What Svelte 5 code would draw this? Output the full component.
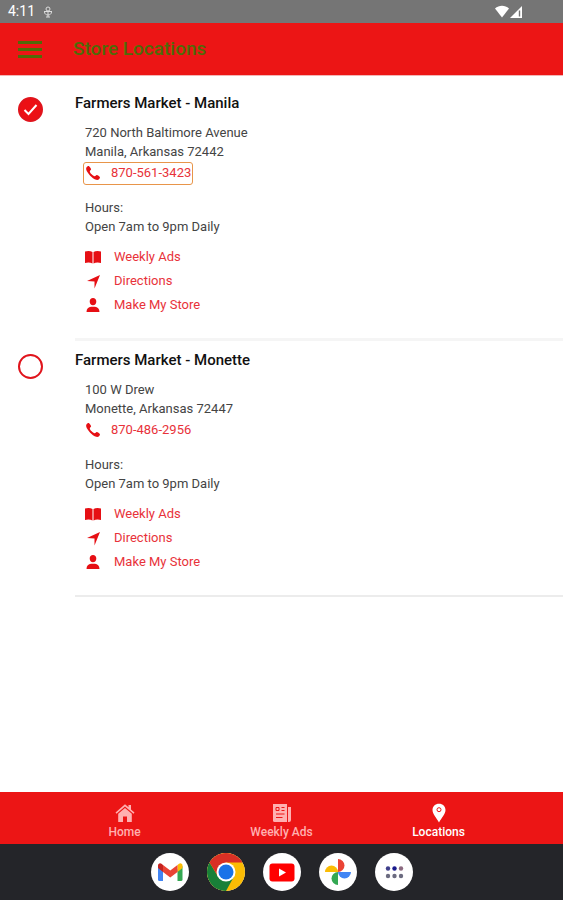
<script>
	let selected = 'manila';
	let tab = 'locations';

	const stores = [
		{
			id: 'manila',
			name: 'Farmers Market - Manila',
			street: '720 North Baltimore Avenue',
			city: 'Manila, Arkansas 72442',
			phone: '870-561-3423',
			hours: 'Open 7am to 9pm Daily',
			focused: true
		},
		{
			id: 'monette',
			name: 'Farmers Market - Monette',
			street: '100 W Drew',
			city: 'Monette, Arkansas 72447',
			phone: '870-486-2956',
			hours: 'Open 7am to 9pm Daily',
			focused: false
		}
	];
</script>

<div class="screen">
	<div class="status">
		<span>4:11</span>
		<svg class="mic" viewBox="0 0 10 12" width="10" height="12">
			<circle cx="5" cy="3" r="2" />
			<path d="M1 5.5h8M1.500 6c0 4 7 4 7 0M5 5v6M3 11h4" />
		</svg>
		<svg class="signal" viewBox="0 0 28 14" width="28" height="14">
			<path d="M0 3.600C4-.2 10-.2 14 3.600L7 12.600z" />
			<path d="M27 1v12H15z" />
			<path d="M24.500 5.500v6" stroke="#757575" stroke-width="1.400" />
		</svg>
	</div>

	<header>
		<button class="menu" aria-label="Menu">
			<span></span>
			<span></span>
			<span></span>
		</button>
		<h1>Store Locations</h1>
	</header>

	<main>
		{#each stores as store}
			<article>
				<label class="pick">
					<input
						type="radio"
						name="store"
						value={store.id}
						aria-label={store.name}
						bind:group={selected}
					/>
					{#if selected === store.id}
						<svg viewBox="0 0 25 25" width="25" height="25">
							<path d="M6.500 13l4 4L18.500 8" />
						</svg>
					{/if}
				</label>

				<div class="info">
					<h2>{store.name}</h2>
					<div class="details">
						<p>{store.street}</p>
						<p>{store.city}</p>
						<a class="phone" class:focused={store.focused} href="tel:{store.phone}">
							<svg viewBox="0 0 16 16" width="16" height="16">
								<path
									d="M1.300 2.700C2 1.600 3.200.8 4.100 1.200c.9.7 1.800 2.100 2 3.100.1.8-1.300 1.300-1.300 2.200.3 1.700 3.100 4.400 4.800 4.700.9 0 1.400-1.400 2.200-1.300 1 .2 2.600 1.200 3.100 2.100.3 1-.6 2.100-1.600 2.800-1.200.6-4.300-.5-7-3.100C3.500 9 .4 5 1.300 2.700z"
								/>
							</svg>
							{store.phone}
						</a>

						<p class="hours">Hours:</p>
						<p>{store.hours}</p>

						<ul>
							<li>
								<a href="#ads">
									<svg viewBox="0 0 16 16" width="16" height="16">
										<path d="M0 2.500C2.500 1.600 5.500 1.700 7.500 3v11.500C5.500 13.300 2.500 13.200 0 14z" />
										<path d="M16 2.500C13.500 1.600 10.500 1.700 8.500 3v11.500c2-1.200 5-1.300 7.500-.5z" />
									</svg>
									Weekly Ads
								</a>
							</li>
							<li>
								<a href="#directions">
									<svg viewBox="0 0 16 16" width="16" height="16">
										<path d="M15 2L9.500 15.500V8.500L2 8z" />
									</svg>
									Directions
								</a>
							</li>
							<li>
								<a href="#my-store">
									<svg viewBox="0 0 16 16" width="16" height="16">
										<path
											d="M8 1c2 0 3.300 1.500 3.300 3.500S10 8.300 8 8.300 4.700 6.500 4.700 4.500 6 1 8 1zM1.500 15c0-3.300 2-4.700 4.500-5.200h4c2.500.5 4.500 1.900 4.500 5.200z"
										/>
									</svg>
									Make My Store
								</a>
							</li>
						</ul>
					</div>
				</div>
			</article>
		{/each}
	</main>

	<nav class="tabs">
		<button class:active={tab === 'home'} on:click={() => (tab = 'home')}>
			<svg viewBox="0 0 20 20" width="20" height="20">
				<path d="M10 1.200l3.500 3V2H16v4.400l3.500 3.200-1 1.200L10 3.600l-8.500 7.200-1-1.200z" />
				<path d="M10 4.900l6.800 5.800V19H12v-5.500H8V19H3.200v-8.300z" />
			</svg>
			Home
		</button>
		<button class:active={tab === 'ads'} on:click={() => (tab = 'ads')}>
			<svg viewBox="0 0 20 20" width="20" height="20">
				<path d="M1 1h14v18H2.500Q1 19 1 17.500z" />
				<path d="M16 4h3v13q0 2-2 2h-1z" />
				<path class="cut" d="M4 4.500h3v3H4zM9.500 4.500h3M9.500 7.500h3M4 11h8.500M4 14.500h6.500M15.500 4v14" />
			</svg>
			Weekly Ads
		</button>
		<button class:active={tab === 'locations'} on:click={() => (tab = 'locations')}>
			<svg viewBox="0 0 20 20" width="20" height="20">
				<path d="M10 .7c3.800 0 6.500 2.700 6.500 6.300 0 4-4 8-6.500 12.500C7.500 15 3.500 11 3.500 7c0-3.600 2.700-6.300 6.500-6.300z" />
				<circle class="cut" cx="10" cy="6.700" r="2" />
			</svg>
			Locations
		</button>
	</nav>

	<div class="dock">
		<button aria-label="Gmail">
			<svg viewBox="0 0 38 38">
				<path fill="#4285f4" d="M7 13l5 3.500V28H8.500Q7 28 7 26.500z" />
				<path fill="#34a853" d="M26.500 16.500l5-3.500v13.500q0 1.500-1.500 1.500h-3.500z" />
				<path fill="#fbbc04" d="M26.500 12l1.500-1.300c1.500-1.200 3.500-.2 3.500 1.800V15l-5 4z" />
				<path fill="#c5221f" d="M12 12l-1.500-1.300C9 9.500 7 10.500 7 12.500V15l5 4z" />
				<path fill="#ea4335" d="M12 12l7.250 5.500L26.500 12v7l-7.250 5.500L12 19z" />
			</svg>
		</button>
		<button aria-label="Chrome">
			<svg viewBox="0 0 38 38">
				<circle cx="19" cy="19" r="19" fill="#fbbc04" />
				<path fill="#188038" d="M2.550 9.500A19 19 0 0 0 19 38l8-14.500L11 23.500z" />
				<path fill="#d93025" d="M2.550 9.500A19 19 0 0 1 35.450 9.500H19L11.200 23.500z" />
				<circle cx="19" cy="19" r="9.500" fill="#fff" />
				<circle cx="19" cy="19" r="7.500" fill="#1a73e8" />
			</svg>
		</button>
		<button aria-label="YouTube">
			<svg viewBox="0 0 38 38">
				<rect x="6.500" y="10.500" width="25" height="18" rx="3" fill="#f00" />
				<path fill="#fff" d="M16 15.500l7 4-7 4z" />
			</svg>
		</button>
		<button aria-label="Photos">
			<svg viewBox="0 0 38 38">
				<path fill="#ea4335" d="M19 6a6.500 6.500 0 0 1 0 13z" />
				<path fill="#4285f4" d="M32 19a6.500 6.500 0 0 1-13 0z" />
				<path fill="#34a853" d="M19 32a6.500 6.500 0 0 1 0-13z" />
				<path fill="#fbbc04" d="M6 19a6.500 6.500 0 0 1 13 0z" />
			</svg>
		</button>
		<button aria-label="All apps">
			<svg viewBox="0 0 38 38" fill="#6b6b80">
				<circle cx="13" cy="15.500" r="2.200" fill="#3f3f8c" />
				<circle cx="19.500" cy="15.500" r="2.200" fill="#1a1a8c" />
				<circle cx="26" cy="15.500" r="2.200" fill="#8c6a80" />
				<circle cx="13" cy="23" r="2.200" />
				<circle cx="19.500" cy="23" r="2.200" />
				<circle cx="26" cy="23" r="2.200" />
			</svg>
		</button>
	</div>
</div>

<style>
	:global(body) {
		margin: 0;
	}

	.screen {
		display: flex;
		flex-direction: column;
		min-height: 100vh;
		background: #fff;
		color: #444;
		font-family: Roboto, 'Liberation Sans', sans-serif;
		font-size: 13px;
		line-height: 19px;
	}

	h1,
	h2,
	p,
	ul {
		margin: 0;
		padding: 0;
	}

	button {
		margin: 0;
		padding: 0;
		border: 0;
		background: none;
		font: inherit;
		cursor: pointer;
	}

	a {
		color: #e8323a;
		text-decoration: none;
	}

	svg {
		display: block;
		flex: none;
	}

	.status {
		display: flex;
		align-items: center;
		gap: 8px;
		height: 23px;
		padding: 0 40px 0 8px;
		background: #757575;
		color: #fff;
		font-size: 14px;
	}

	.status svg {
		fill: #fff;
	}

	.status .mic {
		fill: none;
		stroke: #ddd;
	}

	.signal {
		margin-left: auto;
	}

	header {
		display: flex;
		align-items: center;
		height: 52px;
		border-bottom: 1px solid #f3b5b5;
		background: #ec1515;
	}

	.menu {
		display: flex;
		flex-direction: column;
		gap: 4px;
		width: 24px;
		margin: 0 31px 0 18px;
	}

	.menu span {
		height: 3px;
		background: #4f6b08;
	}

	h1 {
		color: #4f6b08;
		font-size: 19px;
		font-weight: 500;
		line-height: 24px;
	}

	main {
		flex: 1;
		padding-top: 8px;
	}

	article {
		display: flex;
	}

	.pick {
		display: grid;
		width: 25px;
		height: 25px;
		margin: 13px 32px 0 18px;
		cursor: pointer;
	}

	.pick input,
	.pick svg {
		grid-area: 1 / 1;
	}

	.pick input {
		appearance: none;
		width: 25px;
		height: 25px;
		margin: 0;
		border: 2px solid #e0141c;
		border-radius: 50%;
	}

	.pick input:checked {
		background: #ec1015;
	}

	.pick svg {
		fill: none;
		stroke: #fff;
		stroke-width: 2;
		pointer-events: none;
	}

	.info {
		flex: 1;
		padding: 9px 0 21px;
		border-bottom: 3px solid #f5f5f5;
	}

	article:last-child .info {
		border-bottom: 2px solid #ececec;
	}

	h2 {
		margin-bottom: 10px;
		color: #111;
		font-size: 15px;
		font-weight: 500;
		line-height: 20px;
	}

	.details {
		padding-left: 10px;
	}

	.details a {
		display: flex;
		align-items: center;
		gap: 13px;
	}

	.details svg {
		fill: #e60f14;
	}

	.details .phone {
		gap: 10px;
		width: max-content;
		margin: 1px 0 0 -2px;
		padding: 0 1px 1px;
		border: 1px solid transparent;
		border-radius: 3px;
		line-height: 20px;
	}

	.details .focused {
		border-color: #e8954a;
	}

	.hours {
		margin-top: 13px;
	}

	ul {
		margin-top: 9px;
		list-style: none;
	}

	li a {
		width: max-content;
		line-height: 24px;
	}

	.tabs {
		display: flex;
		height: 52px;
		padding: 0 46px;
		background: #ec1515;
	}

	.tabs button {
		display: flex;
		flex: 1;
		flex-direction: column;
		align-items: center;
		justify-content: flex-end;
		gap: 2px;
		padding-bottom: 5px;
		color: #ffb0b0;
		font-size: 12px;
		font-weight: 500;
		line-height: 14px;
	}

	.tabs svg {
		fill: currentColor;
	}

	.tabs .cut {
		fill: none;
		stroke: #ec1515;
	}

	.tabs .active {
		color: #fff;
	}

	.dock {
		display: flex;
		align-items: center;
		justify-content: center;
		gap: 18px;
		height: 56px;
		background: #242529;
	}

	.dock button {
		width: 38px;
		height: 38px;
		border-radius: 50%;
		background: #fff;
	}
</style>
